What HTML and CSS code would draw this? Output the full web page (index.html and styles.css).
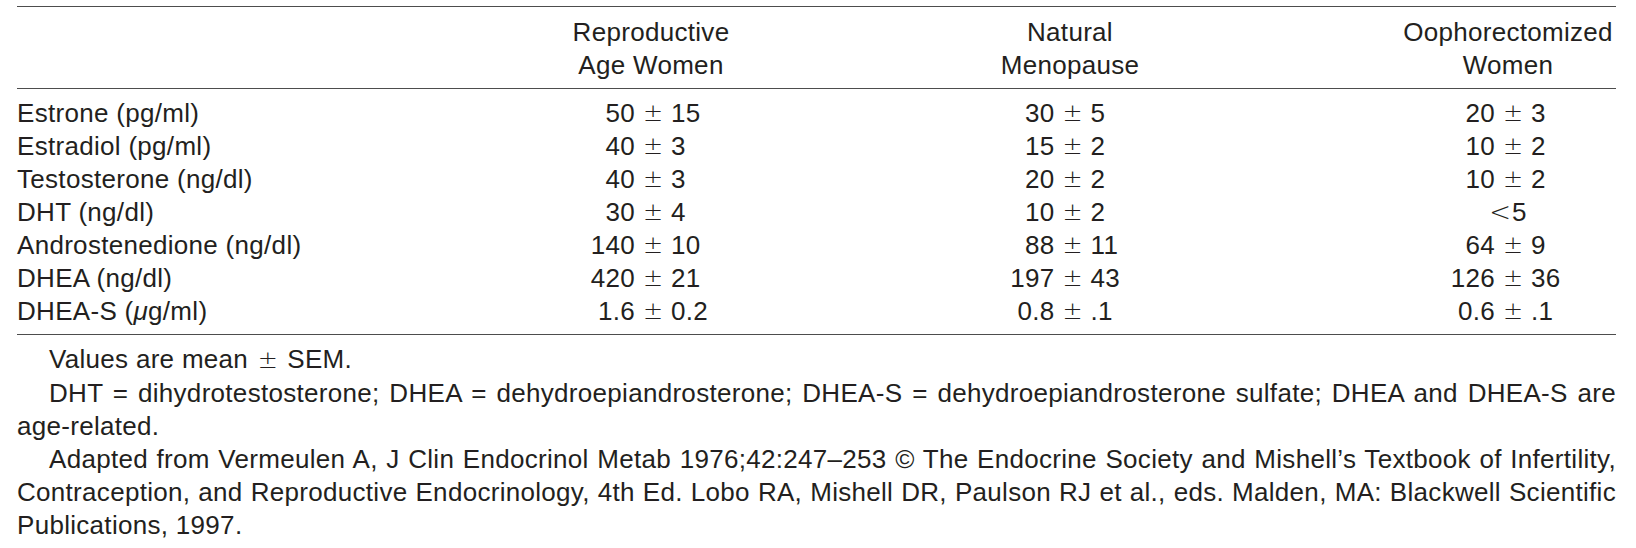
FILE: index.html
```html
<!DOCTYPE html>
<html lang="en">
<head>
<meta charset="utf-8">
<title>Hormone levels</title>
<link rel="stylesheet" href="styles.css">
</head>
<body>
<div class="page">
  <div class="table">
    <div class="row thead">
      <div class="cell label"></div>
      <div class="cell head">Reproductive<br>Age Women</div>
      <div class="cell head">Natural<br>Menopause</div>
      <div class="cell head">Oophorectomized<br>Women</div>
    </div>
    <div class="tbody">
      <div class="row">
        <div class="cell label">Estrone (pg/ml)</div>
        <div class="cell v c1"><span class="a">50</span><span class="pm">±</span><span class="b">15</span></div>
        <div class="cell v c2"><span class="a">30</span><span class="pm">±</span><span class="b">5</span></div>
        <div class="cell v c3"><span class="a">20</span><span class="pm">±</span><span class="b">3</span></div>
      </div>
      <div class="row">
        <div class="cell label">Estradiol (pg/ml)</div>
        <div class="cell v c1"><span class="a">40</span><span class="pm">±</span><span class="b">3</span></div>
        <div class="cell v c2"><span class="a">15</span><span class="pm">±</span><span class="b">2</span></div>
        <div class="cell v c3"><span class="a">10</span><span class="pm">±</span><span class="b">2</span></div>
      </div>
      <div class="row">
        <div class="cell label">Testosterone (ng/dl)</div>
        <div class="cell v c1"><span class="a">40</span><span class="pm">±</span><span class="b">3</span></div>
        <div class="cell v c2"><span class="a">20</span><span class="pm">±</span><span class="b">2</span></div>
        <div class="cell v c3"><span class="a">10</span><span class="pm">±</span><span class="b">2</span></div>
      </div>
      <div class="row">
        <div class="cell label">DHT (ng/dl)</div>
        <div class="cell v c1"><span class="a">30</span><span class="pm">±</span><span class="b">4</span></div>
        <div class="cell v c2"><span class="a">10</span><span class="pm">±</span><span class="b">2</span></div>
        <div class="cell plain"><span class="lt">&lt;</span>5</div>
      </div>
      <div class="row">
        <div class="cell label">Androstenedione (ng/dl)</div>
        <div class="cell v c1"><span class="a">140</span><span class="pm">±</span><span class="b">10</span></div>
        <div class="cell v c2"><span class="a">88</span><span class="pm">±</span><span class="b">11</span></div>
        <div class="cell v c3"><span class="a">64</span><span class="pm">±</span><span class="b">9</span></div>
      </div>
      <div class="row">
        <div class="cell label">DHEA (ng/dl)</div>
        <div class="cell v c1"><span class="a">420</span><span class="pm">±</span><span class="b">21</span></div>
        <div class="cell v c2"><span class="a">197</span><span class="pm">±</span><span class="b">43</span></div>
        <div class="cell v c3"><span class="a">126</span><span class="pm">±</span><span class="b">36</span></div>
      </div>
      <div class="row">
        <div class="cell label">DHEA-S (<i class="mu">μ</i>g/ml)</div>
        <div class="cell v c1"><span class="a">1.6</span><span class="pm">±</span><span class="b">0.2</span></div>
        <div class="cell v c2"><span class="a">0.8</span><span class="pm">±</span><span class="b">.1</span></div>
        <div class="cell v c3"><span class="a">0.6</span><span class="pm">±</span><span class="b">.1</span></div>
      </div>
    </div>
  </div>
  <div class="notes">
    <p class="note">Values are mean <span class="pm-n">±</span> SEM.</p>
    <p class="note">DHT = dihydrotestosterone; DHEA = dehydroepiandrosterone; DHEA-S = dehydroepiandrosterone sulfate; DHEA and DHEA-S are age-related.</p>
    <p class="note">Adapted from Vermeulen A, J Clin Endocrinol Metab 1976;42:247–253 © The Endocrine Society and Mishell’s Textbook of Infertility, Contraception, and Reproductive Endocrinology, 4th Ed. Lobo RA, Mishell DR, Paulson RJ et al., eds. Malden, MA: Blackwell Scientific Publications, 1997.</p>
  </div>
</div>
</body>
</html>
```

FILE: styles.css
```css
html, body {
  margin: 0;
  padding: 0;
  background: #ffffff;
}

body {
  font-family: "Liberation Sans", Arial, Helvetica, sans-serif;
  font-size: 26px;
  letter-spacing: 0.3px;
  color: #231f20;
}

.page {
  margin-left: 17px;
  width: 1599px;
  padding-top: 6px;
}

.table {
  border-top: 1px solid #4d4d4d;
  border-bottom: 1px solid #4d4d4d;
}

.row {
  display: grid;
  grid-template-columns: 545px 178px 660px 216px;
  line-height: 33px;
}

.thead {
  padding: 9px 0 6px;
  border-bottom: 1px solid #4d4d4d;
}

.tbody {
  padding: 8px 0 6px;
}

.cell {
  white-space: nowrap;
}

.head {
  text-align: center;
}

.v {
  display: grid;
  grid-template-columns: 1fr auto 1fr;
}

.v.c1 {
  padding-left: 4px;
}

.v.c2 {
  padding-left: 5px;
}

.v.c3 {
  padding-left: 10px;
}

.a {
  text-align: right;
}

.b {
  text-align: left;
}

.pm {
  margin: 0 8px;
  font-family: "DejaVu Sans", sans-serif;
  font-weight: 200;
  font-size: 24px;
  letter-spacing: 0;
}

.plain {
  text-align: center;
}

.lt {
  font-family: "DejaVu Sans", sans-serif;
  font-weight: 200;
  font-size: 26px;
  letter-spacing: 0;
  margin-right: 1px;
}

.mu {
  font-style: italic;
}

.notes {
  padding-top: 8px;
}

.note {
  margin: 0;
  line-height: 33px;
  text-indent: 32px;
  text-align: justify;
}

.pm-n {
  font-family: "DejaVu Sans", sans-serif;
  font-weight: 200;
  font-size: 24px;
  letter-spacing: 0;
  margin: 0 2px;
}
```
